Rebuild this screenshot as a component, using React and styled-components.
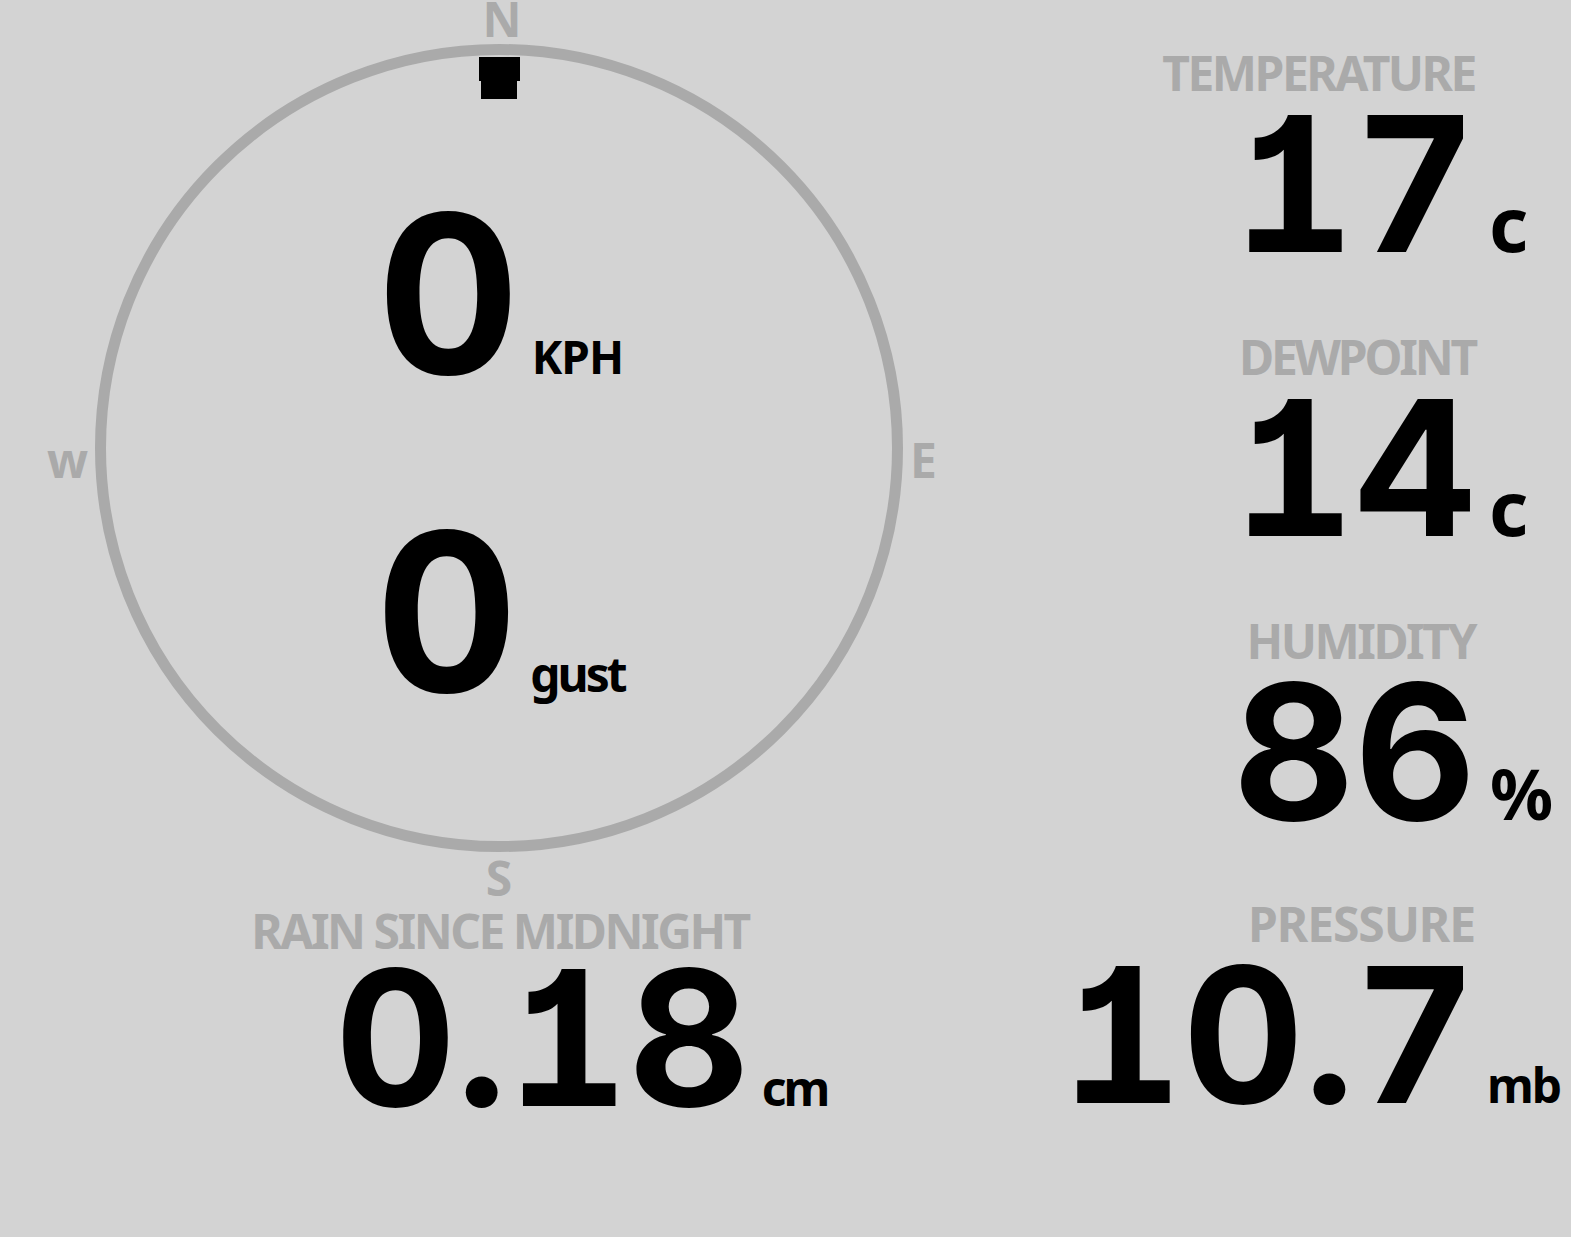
import styled, { createGlobalStyle } from "styled-components";

const GlobalStyle = createGlobalStyle`
  html, body {
    margin: 0;
    padding: 0;
    background: #d3d3d3;
  }
  body {
    font-family: "Noto Sans", "DejaVu Sans", sans-serif;
    font-weight: 700;
  }
`;

const numberFont = `Inter, "Noto Sans", sans-serif`;

const Page = styled.div`
  width: 1571px;
  height: 1237px;
  display: flex;
  overflow: hidden;
`;

const LeftColumn = styled.div`
  width: 998px;
  display: flex;
  flex-direction: column;
  align-items: center;
`;

const RightColumn = styled.div`
  flex: 1;
  display: flex;
  flex-direction: column;
  align-items: flex-end;
  gap: 61px;
  padding: 49px 98px 0 0;
`;

const Dial = styled.div`
  display: grid;
  grid-template-columns: 95px 808px 95px;
  grid-template-rows: 44px 808px 48px;
`;

const Point = styled.div`
  color: #aaa;
  font-size: 48px;
  line-height: 48px;
`;

const North = styled(Point)`
  grid-column: 2;
  grid-row: 1;
  justify-self: center;
  line-height: 38px;
  padding-left: 6px;
`;

const South = styled(Point)`
  grid-column: 2;
  grid-row: 3;
  justify-self: center;
  margin-top: 2px;
`;

const West = styled(Point)`
  grid-column: 1;
  grid-row: 2;
  justify-self: end;
  align-self: center;
  padding-right: 7px;
  margin-top: 24px;
`;

const East = styled(Point)`
  grid-column: 3;
  grid-row: 2;
  justify-self: start;
  align-self: center;
  padding-left: 7px;
  margin-top: 24px;
`;

const Ring = styled.div`
  grid-column: 2;
  grid-row: 2;
  position: relative;
  box-sizing: border-box;
  border: 11px solid #aaa;
  border-radius: 50%;
  display: flex;
  flex-direction: column;
  align-items: center;
  justify-content: center;
  gap: 97px;
  padding-top: 8px;
`;

const Pointer = styled.svg`
  position: absolute;
  top: 2px;
  left: 50%;
  margin-left: -21px;
  transform: rotate(${(p) => p.$deg}deg);
  transform-origin: 21px 393px;
`;

const Reading = styled.div`
  display: flex;
  align-items: baseline;
  padding-left: 2px;
`;

const Big = styled.div`
  font-family: ${numberFont};
  font-feature-settings: "tnum", "cv01";
  font-size: 221px;
  line-height: 1;
  color: #000;
`;

const Small = styled.div`
  font-size: ${(p) => p.$size}px;
  line-height: 1;
  letter-spacing: ${(p) => p.$track || 0}px;
  color: #000;
  margin-left: ${(p) => p.$gap}px;
`;

const Stat = styled.div`
  display: flex;
  flex-direction: column;
  align-items: flex-end;
  margin-top: ${(p) => p.$top || 0}px;
`;

const Label = styled.div`
  font-size: 48px;
  line-height: 48px;
  color: #aaa;
  letter-spacing: ${(p) => p.$track}px;
  margin-right: -2px;
  white-space: nowrap;
`;

const ValueRow = styled.div`
  display: flex;
  align-items: baseline;
`;

const Value = styled.div`
  font-family: ${numberFont};
  font-feature-settings: "tnum", "cv01";
  font-size: ${(p) => p.$size}px;
  line-height: ${(p) => p.$lh};
  color: #000;
  white-space: nowrap;
  margin-right: -3px;
`;

const Unit = styled.div`
  width: 100px;
  margin-right: -100px;
  padding-left: ${(p) => p.$gap}px;
  box-sizing: border-box;
  font-size: ${(p) => p.$size}px;
  line-height: 1;
  letter-spacing: ${(p) => p.$track || 0}px;
  color: #000;
  white-space: nowrap;
`;

function SpeedReading({ value, unit, size, gap, track }) {
  return (
    <Reading>
      <Big>{value}</Big>
      <Small $size={size} $gap={gap} $track={track}>{unit}</Small>
    </Reading>
  );
}

function Measure({
  label,
  labelTrack = -2.5,
  value,
  unit,
  unitSize,
  track,
  size = 188,
  lh = 0.93,
  gap = 15,
  top,
}) {
  return (
    <Stat $top={top}>
      <Label $track={labelTrack}>{label}</Label>
      <ValueRow>
        <Value $size={size} $lh={lh}>{value}</Value>
        <Unit $size={unitSize} $gap={gap} $track={track}>{unit}</Unit>
      </ValueRow>
    </Stat>
  );
}

export default function App() {
  const windDir = 0;
  return (
    <Page>
      <GlobalStyle />
      <LeftColumn>
        <Dial>
          <North>N</North>
          <West>w</West>
          <Ring>
            <Pointer $deg={windDir} width="42" height="44" viewBox="0 0 42 44">
              <rect x="1" y="0" width="41" height="24" fill="#000" />
              <rect x="3" y="20" width="36" height="22" fill="#000" />
            </Pointer>
            <SpeedReading value="0" unit="KPH" size={46} gap={12} track={-1} />
            <SpeedReading value="0" unit="gust" size={48} gap={12} track={-3} />
          </Ring>
          <East>E</East>
          <South>S</South>
        </Dial>
        <Measure
          label="RAIN SINCE MIDNIGHT"
          value="0.18"
          unit="cm"
          unitSize={48}
          track={-3}
          lh={0.88}
          top={7}
        />
      </LeftColumn>
      <RightColumn>
        <Measure label="TEMPERATURE" value="17" unit="c" unitSize={76} gap={16} />
        <Measure label="DEWPOINT" labelTrack={-3.2} value="14" unit="c" unitSize={76} gap={16} />
        <Measure label="HUMIDITY" value="86" unit="%" unitSize={70} gap={17} />
        <Measure label="PRESSURE" labelTrack={-1.1} value="10.7" unit="mb" unitSize={48} track={-2} gap={14} />
      </RightColumn>
    </Page>
  );
}
